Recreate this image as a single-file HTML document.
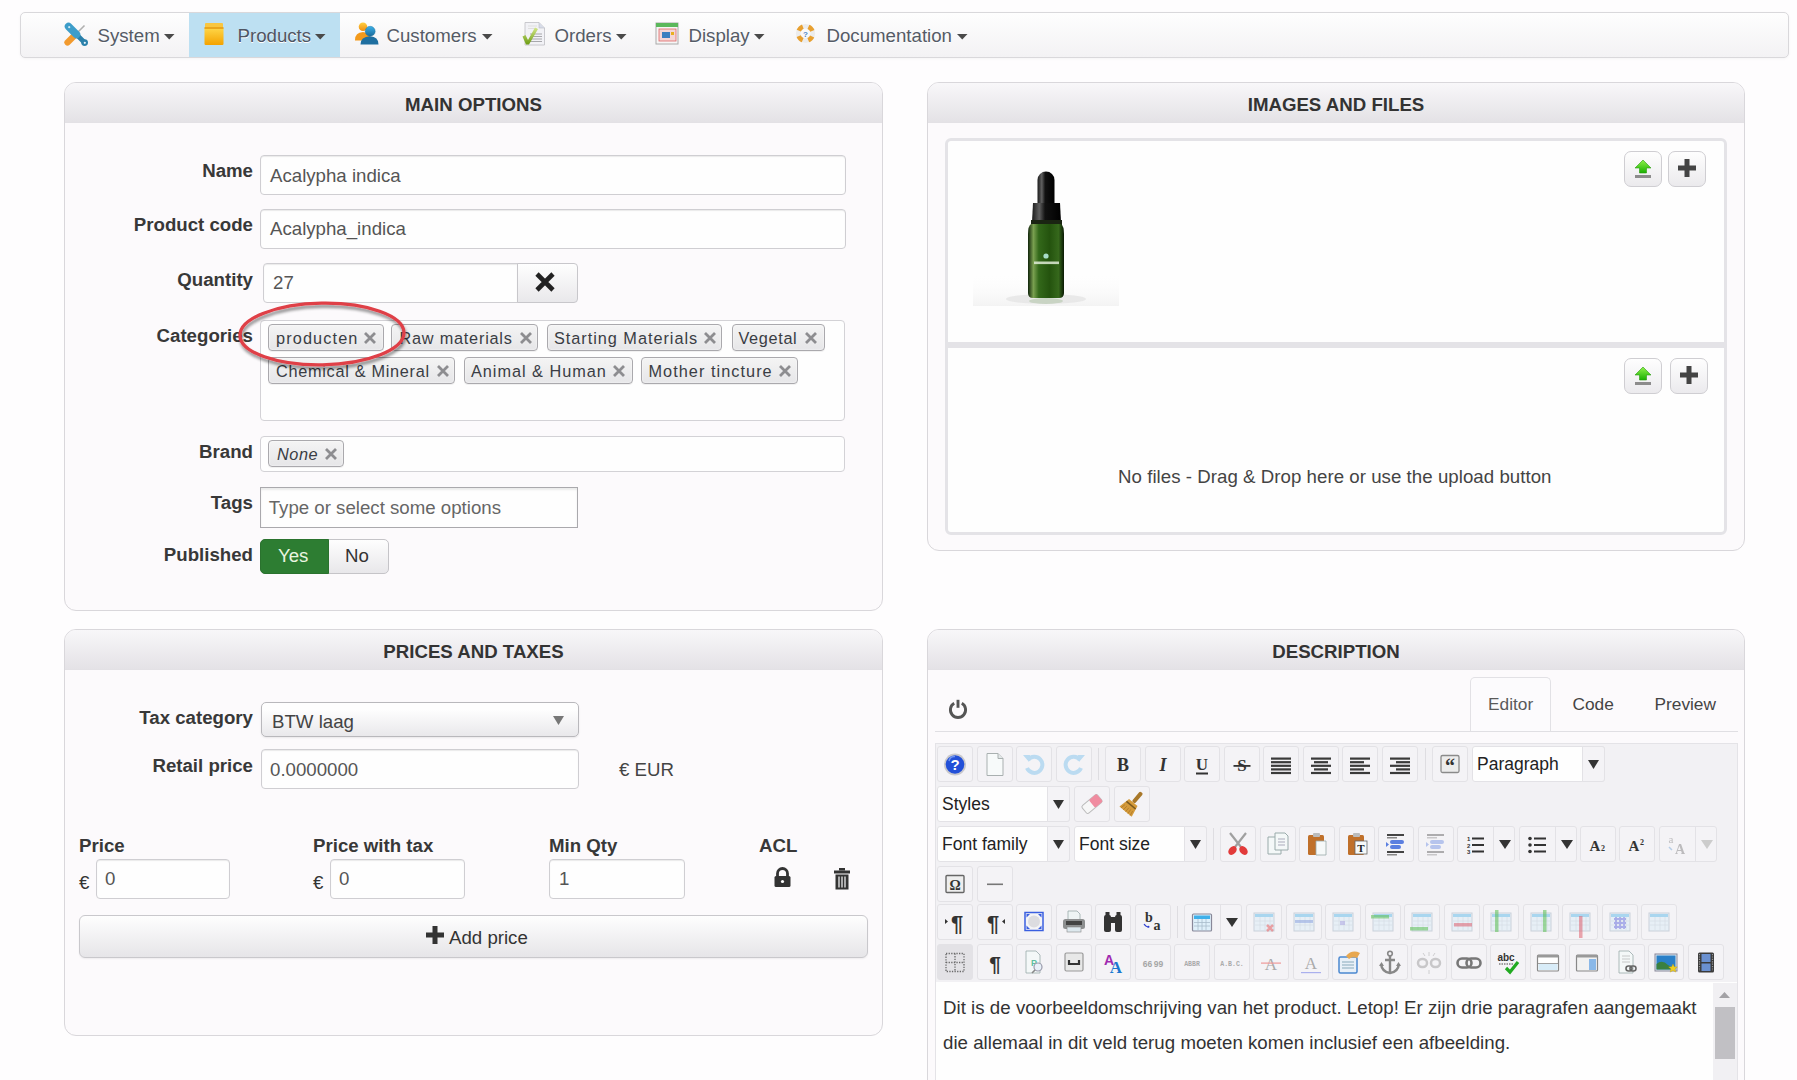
<!DOCTYPE html>
<html><head><meta charset="utf-8"><title>Product edit</title><style>
*{margin:0;padding:0;box-sizing:border-box}
html,body{width:1797px;height:1080px;overflow:hidden;background:#fefdfe;font-family:"Liberation Sans",sans-serif}
.t{position:absolute;line-height:1;white-space:nowrap}
.b{position:absolute}
.panel{position:absolute;border:1px solid #d9d7db;border-radius:12px;background:#fcfafc;overflow:hidden}
.ph{position:absolute;left:0;top:0;right:0;height:40px;background:linear-gradient(#f8f7f9,#e4e2e6);border-bottom:1px solid #e3e1e5}
.inp{position:absolute;border:1px solid #cfced2;border-radius:4px;background:#fefefe;box-shadow:inset 0 1px 1px rgba(0,0,0,.08)}
.tag{position:absolute;height:26px;border:1px solid #aaa9ad;border-radius:4px;background:linear-gradient(#f4f4f4,#e6e6e8);box-shadow:0 0 2px #fff inset,0 1px 0 rgba(0,0,0,.05)}
.tb{position:absolute;width:35px;height:35px;border:1px solid #e4e3e6;border-radius:3px;background:#f4f3f6}
</style></head>
<body>
<div class="b" style="left:20px;top:12px;width:1769px;height:46px;border:1px solid #d9d8db;border-radius:5px;background:linear-gradient(#fefefe,#f3f2f4);box-shadow:0 1px 3px rgba(0,0,0,.04)"></div>
<div class="b" style="left:189px;top:13px;width:151px;height:44px;background:#bde0f2"></div>
<div class="t" style="left:97.5px;top:26.70px;font-size:18.67px;color:#555b66;text-shadow:0 1px 0 #fff">System</div>
<svg class="b" style="left:164px;top:34px" width="11" height="5.5" viewBox="0 0 11 5.5"><path d="M0 0h10.5L5.25 5.5z" fill="#4a4a4a"/></svg>
<div class="t" style="left:237.5px;top:26.70px;font-size:18.67px;color:#4f5562;text-shadow:0 1px 0 #fff">Products</div>
<svg class="b" style="left:315px;top:34px" width="11" height="5.5" viewBox="0 0 11 5.5"><path d="M0 0h10.5L5.25 5.5z" fill="#4a4a4a"/></svg>
<div class="t" style="left:386.5px;top:26.70px;font-size:18.67px;color:#555b66;text-shadow:0 1px 0 #fff">Customers</div>
<svg class="b" style="left:482px;top:34px" width="11" height="5.5" viewBox="0 0 11 5.5"><path d="M0 0h10.5L5.25 5.5z" fill="#4a4a4a"/></svg>
<div class="t" style="left:554.5px;top:26.70px;font-size:18.67px;color:#555b66;text-shadow:0 1px 0 #fff">Orders</div>
<svg class="b" style="left:616px;top:34px" width="11" height="5.5" viewBox="0 0 11 5.5"><path d="M0 0h10.5L5.25 5.5z" fill="#4a4a4a"/></svg>
<div class="t" style="left:688.5px;top:26.70px;font-size:18.67px;color:#555b66;text-shadow:0 1px 0 #fff">Display</div>
<svg class="b" style="left:754px;top:34px" width="11" height="5.5" viewBox="0 0 11 5.5"><path d="M0 0h10.5L5.25 5.5z" fill="#4a4a4a"/></svg>
<div class="t" style="left:826.5px;top:26.70px;font-size:18.67px;color:#555b66;text-shadow:0 1px 0 #fff">Documentation</div>
<svg class="b" style="left:957px;top:34px" width="11" height="5.5" viewBox="0 0 11 5.5"><path d="M0 0h10.5L5.25 5.5z" fill="#4a4a4a"/></svg>
<svg class="b" style="left:64px;top:22px" width="25" height="25" viewBox="0 0 25 25">
<path d="M3.5 20.5 L11 13" stroke="#f29a2e" stroke-width="6.2" stroke-linecap="round"/>
<path d="M12 12 L20.5 3.5" stroke="#b0b0b0" stroke-width="1.6"/>
<path d="M13 13 L20.5 20.5" stroke="#2a80aa" stroke-width="4.6" stroke-linecap="round"/>
<path d="M4.5 4.5 L12.5 12.5" stroke="#3d9dc9" stroke-width="7.5" stroke-linecap="round"/>
<circle cx="5.2" cy="5.2" r="1.1" fill="#cde9f5"/>
<circle cx="20.6" cy="20.6" r="3.4" fill="#2a80aa"/><circle cx="20.8" cy="20.8" r="1.1" fill="#e8f4fa"/>
</svg>
<svg class="b" style="left:203px;top:22px" width="23" height="24" viewBox="0 0 23 24">
<defs><linearGradient id="pg" x1="0" y1="0" x2="0" y2="1"><stop offset="0" stop-color="#ffd84a"/><stop offset="1" stop-color="#f4a200"/></linearGradient></defs>
<path d="M2 2 Q2 1 3 1 H19 Q20 1 20 2 V6 H2z" fill="#f9c640"/>
<rect x="1.5" y="5.5" width="19" height="17.5" rx="1.2" fill="url(#pg)"/>
<rect x="1.5" y="5" width="19" height="2" fill="#e39a12" opacity="0.8"/>
</svg>
<svg class="b" style="left:354px;top:22px" width="25" height="24" viewBox="0 0 25 24">
<defs>
<linearGradient id="cg1" x1="0" y1="0" x2="0" y2="1"><stop offset="0" stop-color="#ffd040"/><stop offset="1" stop-color="#f08c10"/></linearGradient>
<linearGradient id="cg2" x1="0" y1="0" x2="0" y2="1"><stop offset="0" stop-color="#3cb0e8"/><stop offset="1" stop-color="#1a6a9a"/></linearGradient>
</defs>
<circle cx="9" cy="4.8" r="4.3" fill="url(#cg1)"/>
<path d="M1 18 Q1 10.5 9 10 Q16.5 10.5 16.5 17 L16 18.5 H1z" fill="#f39a1c"/>
<circle cx="16.2" cy="9.3" r="5" fill="url(#cg2)" stroke="#1e6e98" stroke-width="0.4"/>
<path d="M6.5 22.5 Q6.5 14.5 16 14.2 Q24.5 14.5 24.5 22.5z" fill="#1f6fa0"/>
</svg>
<svg class="b" style="left:521px;top:22px" width="25" height="24" viewBox="0 0 25 24">
<defs><linearGradient id="og" x1="0" y1="0" x2="0" y2="1"><stop offset="0" stop-color="#d4e88a"/><stop offset="1" stop-color="#6c9c12"/></linearGradient></defs>
<path d="M4 0.5h14l5.5 5.5v17H4z" fill="#f2f2f6" stroke="#c4c4c8" stroke-width="0.9"/>
<path d="M18 0.5v5.5h5.5" fill="#d8dce8" stroke="#b8bcc8" stroke-width="0.6"/>
<path d="M7 4h9M7 6.5h9" stroke="#dedede" stroke-width="1"/>
<path d="M9 12h12M9 14.5h12M9 17h12M9 19.5h12" stroke="#a8a8ac" stroke-width="1.1"/>
<path d="M1.5 14.5 L4.5 13 L7 18 L14 5.5 L17 7 L8 22.5 L5 22.5z" fill="url(#og)"/>
</svg>
<svg class="b" style="left:655px;top:22px" width="24" height="23" viewBox="0 0 24 23">
<rect x="1" y="1" width="22" height="21" fill="#f6f6f6" stroke="#aaa"/>
<rect x="1" y="1" width="22" height="4" fill="#5cb85c"/>
<rect x="4" y="7" width="17" height="12" fill="#f3d6d6" stroke="#e06666" stroke-width="0.8"/>
<rect x="7" y="10" width="8" height="6" fill="#3a7fc0"/>
<rect x="16" y="10" width="3" height="3" fill="#e8b020"/>
</svg>
<svg class="b" style="left:795px;top:22px" width="22" height="22" viewBox="0 0 22 22">
<circle cx="10.5" cy="11.5" r="7.3" fill="none" stroke="#ececec" stroke-width="4.6"/>
<g transform="rotate(45 10.5 11.5)"><circle cx="10.5" cy="11.5" r="7.3" fill="none" stroke="#e8a030" stroke-width="4.6" stroke-dasharray="5.73 5.73" stroke-dashoffset="2.87"/></g>
<text x="10.5" y="14.5" font-size="8" text-anchor="middle" fill="#4a88c8" font-family="Liberation Sans" font-weight="700">?</text>
</svg>
<div class="panel" style="left:64px;top:82px;width:819px;height:529px"><div class="ph"></div></div>
<div class="t" style="left:64.0px;width:819px;text-align:center;top:96.00px;font-size:18.67px;font-weight:700;color:#333;">MAIN OPTIONS</div>
<div class="panel" style="left:927px;top:82px;width:818px;height:469px"><div class="ph"></div></div>
<div class="t" style="left:927.0px;width:818px;text-align:center;top:96.00px;font-size:18.67px;font-weight:700;color:#333;">IMAGES AND FILES</div>
<div class="panel" style="left:64px;top:629px;width:819px;height:407px"><div class="ph"></div></div>
<div class="t" style="left:64.0px;width:819px;text-align:center;top:643.00px;font-size:18.67px;font-weight:700;color:#333;">PRICES AND TAXES</div>
<div class="panel" style="left:927px;top:629px;width:818px;height:500px"><div class="ph"></div></div>
<div class="t" style="left:927.0px;width:818px;text-align:center;top:643.00px;font-size:18.67px;font-weight:700;color:#333;">DESCRIPTION</div>
<div class="t" style="right:1544px;top:162.00px;font-size:18.67px;text-align:right;font-weight:700;color:#383838;">Name</div>
<div class="inp" style="left:260px;top:155px;width:586px;height:40px;"></div>
<div class="t" style="left:270px;top:166.50px;font-size:18.67px;color:#555;">Acalypha indica</div>
<div class="t" style="right:1544px;top:215.50px;font-size:18.67px;text-align:right;font-weight:700;color:#383838;">Product code</div>
<div class="inp" style="left:260px;top:209px;width:586px;height:40px;"></div>
<div class="t" style="left:270px;top:220.00px;font-size:18.67px;color:#555;">Acalypha_indica</div>
<div class="t" style="right:1544px;top:270.50px;font-size:18.67px;text-align:right;font-weight:700;color:#383838;">Quantity</div>
<div class="inp" style="left:263px;top:263px;width:255px;height:40px;border-radius:4px 0 0 4px"></div>
<div class="t" style="left:273px;top:274.00px;font-size:18.67px;color:#555;">27</div>
<div class="b" style="left:517px;top:263px;width:61px;height:40px;border:1px solid #c8c7cb;border-radius:0 4px 4px 0;background:linear-gradient(#fefefe,#e9e8eb)"></div>
<svg class="b" style="left:534px;top:271px" width="22" height="22" viewBox="0 0 22 22"><path d="M3 3L19 19M19 3L3 19" stroke="#222" stroke-width="4.6" stroke-linecap="butt"/></svg>
<div class="t" style="right:1544px;top:327.30px;font-size:18.67px;text-align:right;font-weight:700;color:#383838;">Categories</div>
<div class="b" style="left:260px;top:320px;width:585px;height:101px;border:1px solid #d3d2d6;border-radius:4px;background:#fefefe"></div>
<div class="tag" style="left:268px;top:324px;width:116px;height:27px;"></div>
<div class="t" style="left:276px;top:330.00px;font-size:16.3px;color:#3a3d44;letter-spacing:1.12px;">producten</div>
<svg class="b" style="left:363px;top:331px" width="14" height="14" viewBox="0 0 14 14"><path d="M2 2L12 12M12 2L2 12" stroke="#8d8d90" stroke-width="2.8"/></svg>
<div class="tag" style="left:391px;top:324px;width:147px;height:27px;"></div>
<div class="t" style="left:399.5px;top:330.00px;font-size:16.3px;color:#3a3d44;letter-spacing:0.77px;">Raw materials</div>
<svg class="b" style="left:519px;top:331px" width="14" height="14" viewBox="0 0 14 14"><path d="M2 2L12 12M12 2L2 12" stroke="#8d8d90" stroke-width="2.8"/></svg>
<div class="tag" style="left:547px;top:324px;width:175px;height:27px;"></div>
<div class="t" style="left:554px;top:330.00px;font-size:16.3px;color:#3a3d44;letter-spacing:0.97px;">Starting Materials</div>
<svg class="b" style="left:703px;top:331px" width="14" height="14" viewBox="0 0 14 14"><path d="M2 2L12 12M12 2L2 12" stroke="#8d8d90" stroke-width="2.8"/></svg>
<div class="tag" style="left:732px;top:324px;width:93px;height:27px;"></div>
<div class="t" style="left:738.5px;top:330.00px;font-size:16.3px;color:#3a3d44;letter-spacing:0.65px;">Vegetal</div>
<svg class="b" style="left:804px;top:331px" width="14" height="14" viewBox="0 0 14 14"><path d="M2 2L12 12M12 2L2 12" stroke="#8d8d90" stroke-width="2.8"/></svg>
<div class="tag" style="left:268px;top:357px;width:187px;height:27px;"></div>
<div class="t" style="left:276px;top:363.00px;font-size:16.3px;color:#3a3d44;letter-spacing:0.7px;">Chemical &amp; Mineral</div>
<svg class="b" style="left:436px;top:364px" width="14" height="14" viewBox="0 0 14 14"><path d="M2 2L12 12M12 2L2 12" stroke="#8d8d90" stroke-width="2.8"/></svg>
<div class="tag" style="left:464px;top:357px;width:169px;height:27px;"></div>
<div class="t" style="left:471px;top:363.00px;font-size:16.3px;color:#3a3d44;letter-spacing:0.97px;">Animal &amp; Human</div>
<svg class="b" style="left:612px;top:364px" width="14" height="14" viewBox="0 0 14 14"><path d="M2 2L12 12M12 2L2 12" stroke="#8d8d90" stroke-width="2.8"/></svg>
<div class="tag" style="left:641px;top:357px;width:157px;height:27px;"></div>
<div class="t" style="left:648.5px;top:363.00px;font-size:16.3px;color:#3a3d44;letter-spacing:1.04px;">Mother tincture</div>
<svg class="b" style="left:778px;top:364px" width="14" height="14" viewBox="0 0 14 14"><path d="M2 2L12 12M12 2L2 12" stroke="#8d8d90" stroke-width="2.8"/></svg>
<div class="t" style="right:1544px;top:443.00px;font-size:18.67px;text-align:right;font-weight:700;color:#383838;">Brand</div>
<div class="b" style="left:260px;top:436px;width:585px;height:36px;border:1px solid #d3d2d6;border-radius:4px;background:#fefefe"></div>
<div class="tag" style="left:268px;top:440px;width:76px;height:27px;"></div>
<div class="t" style="left:277px;top:446.00px;font-size:16.3px;color:#3a3d44;letter-spacing:0.55px;font-style:italic">None</div>
<svg class="b" style="left:324px;top:447px" width="14" height="14" viewBox="0 0 14 14"><path d="M2 2L12 12M12 2L2 12" stroke="#8d8d90" stroke-width="2.8"/></svg>
<div class="t" style="right:1544px;top:493.80px;font-size:18.67px;text-align:right;font-weight:700;color:#383838;">Tags</div>
<div class="b" style="left:260px;top:487px;width:318px;height:41px;border:1px solid #aaa9ad;background:#fefefe;box-shadow:inset 0 2px 2px rgba(0,0,0,.08)"></div>
<div class="t" style="left:268.7px;top:498.80px;font-size:18.67px;color:#666;">Type or select some options</div>
<div class="t" style="right:1544px;top:546.40px;font-size:18.67px;text-align:right;font-weight:700;color:#383838;">Published</div>
<div class="b" style="left:260px;top:539px;width:129px;height:35px;border:1px solid #c5c4c8;border-radius:5px;background:linear-gradient(#fefefe,#e8e7ea);overflow:hidden"></div>
<div class="b" style="left:260px;top:539px;width:69px;height:35px;border-radius:5px 0 0 5px;background:#2d7d32;border:1px solid #2a722e"></div>
<div class="t" style="left:278px;top:547.40px;font-size:18.67px;color:#e9f5e0;">Yes</div>
<div class="t" style="left:345px;top:547.40px;font-size:18.67px;color:#333;">No</div>
<svg class="b" style="left:225px;top:290px" width="200" height="90" viewBox="225 290 200 90"><defs><filter id="esh" x="-10%" y="-20%" width="120%" height="150%"><feGaussianBlur in="SourceAlpha" stdDeviation="1.6"/><feOffset dx="0.5" dy="2.5" result="o"/><feComponentTransfer><feFuncA type="linear" slope="0.45"/></feComponentTransfer><feMerge><feMergeNode/><feMergeNode in="SourceGraphic"/></feMerge></filter></defs><g filter="url(#esh)"><ellipse cx="322" cy="334" rx="82" ry="30.8" transform="rotate(-1 322 334)" fill="none" stroke="#df3f47" stroke-width="3.3"/></g></svg><div class="b" style="left:945px;top:138px;width:782px;height:207px;border:3px solid #e4e3e7;border-radius:6px 6px 0 0;background:#fefefe"></div>
<div class="b" style="left:945px;top:345px;width:782px;height:190px;border:3px solid #e4e3e7;border-top-width:3px;border-radius:0 0 6px 6px;background:#fefefe"></div>
<svg class="b" style="left:973px;top:160px" width="146" height="148" viewBox="0 0 146 148">
<defs>
<linearGradient id="bg1" x1="0" y1="0" x2="1" y2="0"><stop offset="0" stop-color="#10240a"/><stop offset="0.15" stop-color="#7aa050"/><stop offset="0.3" stop-color="#33681a"/><stop offset="0.6" stop-color="#24530e"/><stop offset="0.85" stop-color="#36681c"/><stop offset="1" stop-color="#0a1a04"/></linearGradient>
<linearGradient id="bc" x1="0" y1="0" x2="1" y2="0"><stop offset="0" stop-color="#1a1a1a"/><stop offset="0.25" stop-color="#606060"/><stop offset="0.45" stop-color="#111"/><stop offset="1" stop-color="#000"/></linearGradient>
<linearGradient id="sh" x1="0" y1="0" x2="0" y2="1"><stop offset="0" stop-color="#fff" stop-opacity="0"/><stop offset="1" stop-color="#ececec"/></linearGradient>
</defs>
<rect x="0" y="112" width="146" height="34" fill="url(#sh)" opacity="0.6"/><ellipse cx="73" cy="139" rx="40" ry="5" fill="#e2e2e2" opacity="0.7"/>
<path d="M64.5 43 V20 A8.5 8.5 0 0 1 81.5 20 V43z" fill="url(#bc)"/>
<path d="M60 43 H87 L88 62 H59z" fill="url(#bc)"/>
<path d="M58 60 H89 V65 H58z" fill="#1a2412"/>
<path d="M58 64 Q55 66 55 74 V133 Q55 138 60 138 H86 Q91 138 91 133 V74 Q91 66 88 64z" fill="url(#bg1)"/>
<circle cx="73" cy="96" r="2.6" fill="#a8dcc8"/>
<rect x="61" y="101.5" width="25" height="2.6" fill="#e0ecd8" opacity="0.85"/>
<ellipse cx="73" cy="141" rx="17" ry="3" fill="#90b080" opacity="0.35"/>
</svg>
<div class="b" style="left:1624px;top:151px;width:38px;height:36px;border:1px solid #cfced2;border-radius:7px;background:linear-gradient(#fefefe,#ebeaed)"></div>
<svg class="b" style="left:1632px;top:158px" width="22" height="22" viewBox="0 0 22 22">
<defs><linearGradient id="ug" x1="0" y1="0" x2="0" y2="1"><stop offset="0" stop-color="#8ef24a"/><stop offset="1" stop-color="#19b000"/></linearGradient></defs>
<path d="M11 2 L19 10 H14.5 V15 H7.5 V10 H3z" fill="url(#ug)" stroke="#2a9a10" stroke-width="0.6"/>
<rect x="3" y="17" width="16" height="3" fill="#8c8c8c"/>
</svg>
<div class="b" style="left:1668px;top:151px;width:38px;height:36px;border:1px solid #cfced2;border-radius:7px;background:linear-gradient(#fefefe,#ebeaed)"></div>
<svg class="b" style="left:1677px;top:158px" width="20" height="20" viewBox="0 0 20 20"><path d="M7.5 1h5v6.5H19v5h-6.5V19h-5v-6.5H1v-5h6.5z" fill="#444" transform="scale(1.0)"/></svg>
<div class="b" style="left:1624px;top:358px;width:38px;height:36px;border:1px solid #cfced2;border-radius:7px;background:linear-gradient(#fefefe,#ebeaed)"></div>
<svg class="b" style="left:1632px;top:365px" width="22" height="22" viewBox="0 0 22 22">
<defs><linearGradient id="ug" x1="0" y1="0" x2="0" y2="1"><stop offset="0" stop-color="#8ef24a"/><stop offset="1" stop-color="#19b000"/></linearGradient></defs>
<path d="M11 2 L19 10 H14.5 V15 H7.5 V10 H3z" fill="url(#ug)" stroke="#2a9a10" stroke-width="0.6"/>
<rect x="3" y="17" width="16" height="3" fill="#8c8c8c"/>
</svg>
<div class="b" style="left:1670px;top:358px;width:38px;height:36px;border:1px solid #cfced2;border-radius:7px;background:linear-gradient(#fefefe,#ebeaed)"></div>
<svg class="b" style="left:1679px;top:365px" width="20" height="20" viewBox="0 0 20 20"><path d="M7.5 1h5v6.5H19v5h-6.5V19h-5v-6.5H1v-5h6.5z" fill="#444" transform="scale(1.0)"/></svg>
<div class="t" style="left:1118px;top:468.30px;font-size:18.67px;color:#444;letter-spacing:0.04px;">No files - Drag &amp; Drop here or use the upload button</div>
<div class="t" style="right:1544px;top:709.40px;font-size:18.67px;text-align:right;font-weight:700;color:#383838;">Tax category</div>
<div class="b" style="left:261px;top:702px;width:318px;height:35px;border:1px solid #b9b8bc;border-radius:5px;background:linear-gradient(#fefefe 20%,#e9e8eb);box-shadow:0 1px 2px rgba(0,0,0,.08)"></div>
<div class="t" style="left:272px;top:712.50px;font-size:18.67px;color:#444;">BTW laag</div>
<svg class="b" style="left:553px;top:716px" width="11" height="9" viewBox="0 0 11 9"><path d="M0 0h11L5.5 9z" fill="#777"/></svg>
<div class="t" style="right:1544px;top:757.00px;font-size:18.67px;text-align:right;font-weight:700;color:#383838;">Retail price</div>
<div class="inp" style="left:261px;top:749px;width:318px;height:40px;"></div>
<div class="t" style="left:270px;top:761.00px;font-size:18.67px;color:#555;">0.0000000</div>
<div class="t" style="left:619px;top:761.00px;font-size:18.67px;color:#444;">€ EUR</div>
<div class="t" style="left:79px;top:837.20px;font-size:18.67px;font-weight:700;color:#383838;">Price</div>
<div class="t" style="left:313px;top:837.20px;font-size:18.67px;font-weight:700;color:#383838;">Price with tax</div>
<div class="t" style="left:549px;top:837.20px;font-size:18.67px;font-weight:700;color:#383838;">Min Qty</div>
<div class="t" style="left:759px;top:837.20px;font-size:18.67px;font-weight:700;color:#383838;">ACL</div>
<div class="t" style="left:79px;top:874.00px;font-size:18.67px;color:#333;">€</div>
<div class="inp" style="left:96px;top:859px;width:134px;height:40px;"></div>
<div class="t" style="left:105px;top:870.00px;font-size:18.67px;color:#555;">0</div>
<div class="t" style="left:313px;top:874.00px;font-size:18.67px;color:#333;">€</div>
<div class="inp" style="left:330px;top:859px;width:135px;height:40px;"></div>
<div class="t" style="left:339px;top:870.00px;font-size:18.67px;color:#555;">0</div>
<div class="inp" style="left:549px;top:859px;width:136px;height:40px;"></div>
<div class="t" style="left:559px;top:870.00px;font-size:18.67px;color:#555;">1</div>
<svg class="b" style="left:773px;top:867px" width="19" height="21" viewBox="0 0 19 21">
<path d="M4.5 9 V6.5 A5 5 0 0 1 14.5 6.5 V9" fill="none" stroke="#333" stroke-width="2.8"/>
<rect x="1.5" y="9" width="16" height="11" rx="1.5" fill="#333"/>
<circle cx="9.5" cy="14.5" r="1.6" fill="#fff"/>
</svg>
<svg class="b" style="left:833px;top:867px" width="18" height="23" viewBox="0 0 18 23">
<rect x="6" y="1" width="6" height="2.5" fill="#333"/>
<rect x="1" y="3.5" width="16" height="3" fill="#333"/>
<rect x="2.5" y="7.5" width="13" height="15" fill="#333"/>
<path d="M6 9.5V20.5M9 9.5V20.5M12 9.5V20.5" stroke="#fbfafc" stroke-width="1.2"/>
</svg>
<div class="b" style="left:79px;top:915px;width:789px;height:43px;border:1px solid #c9c8cc;border-radius:6px;background:linear-gradient(#fefefe,#e6e5e8);box-shadow:0 1px 2px rgba(0,0,0,.06)"></div>
<svg class="b" style="left:425px;top:925px" width="20" height="20" viewBox="0 0 20 20"><path d="M7.5 1h5v6.5H19v5h-6.5V19h-5v-6.5H1v-5h6.5z" fill="#333" transform="scale(1.0)"/></svg>
<div class="t" style="left:449px;top:929.30px;font-size:18.67px;color:#333;">Add price</div>
<svg class="b" style="left:947px;top:697px" width="22" height="22" viewBox="0 0 22 22">
<path d="M7.2 6.3 A7.6 7.6 0 1 0 14.8 6.3" fill="none" stroke="#555" stroke-width="2.9" stroke-linecap="butt"/>
<path d="M11 2.8 V10.8" stroke="#555" stroke-width="2.9"/>
</svg>
<div class="b" style="left:1470px;top:677px;width:81px;height:55px;border:1px solid #e2e1e5;border-bottom:none;border-radius:5px 5px 0 0;background:#fcfbfd"></div>
<div class="b" style="left:935px;top:731px;width:803px;height:1px;background:#e0dfe3"></div>
<div class="t" style="left:1488px;top:696.16px;font-size:17.3px;color:#5a5a5a;">Editor</div>
<div class="t" style="left:1572.5px;top:696.16px;font-size:17.3px;color:#444;">Code</div>
<div class="t" style="left:1654.5px;top:696.16px;font-size:17.3px;color:#444;">Preview</div>
<div class="b" style="left:935px;top:743px;width:803px;height:240px;background:#f2f1f4;border:1px solid #e4e3e7;border-bottom:1px solid #dcdbdf"></div>
<div class="b" style="left:935px;top:982px;width:803px;height:110px;background:#fefefe;border-left:1px solid #e4e3e7;border-right:1px solid #e4e3e7"></div>
<div style="position:absolute;left:-0.5px;top:0;width:1797px;height:1080px"><div class="b" style="left:937.5px;top:746px;width:36px;height:36px;border:1px solid #e3e2e6;border-radius:3px;background:#f4f3f6"></div>
<svg class="b" style="left:937.5px;top:746px" width="36" height="36" viewBox="0 0 36 36"><circle cx="18" cy="18.5" r="11" fill="#c8c8cc"/><circle cx="18" cy="18.5" r="9.3" fill="#2350d8"/><path d="M12 15 Q13 10 18 10.5" stroke="#6f95f0" stroke-width="1.5" fill="none"/><text x="18" y="24" font-size="15" font-weight="700" text-anchor="middle" fill="#fff" font-family="Liberation Sans">?</text></svg>
<div class="b" style="left:977.0px;top:746px;width:36px;height:36px;border:1px solid #e3e2e6;border-radius:3px;background:#f4f3f6"></div>
<svg class="b" style="left:977.0px;top:746px" width="36" height="36" viewBox="0 0 36 36"><path d="M10 7.5h11l5 5v17H10z" fill="#f7fafa" stroke="#a9b0b0" stroke-width="1"/><path d="M21 7.5v5h5" fill="#e2e8e8" stroke="#a9b0b0" stroke-width="1"/></svg>
<div class="b" style="left:1016.5px;top:746px;width:36px;height:36px;border:1px solid #e3e2e6;border-radius:3px;background:#f4f3f6"></div>
<svg class="b" style="left:1016.5px;top:746px" width="36" height="36" viewBox="0 0 36 36"><g opacity="0.75"><path d="M12 14 A8 8 0 1 1 11 22" fill="none" stroke="#a8d4f0" stroke-width="4"/><path d="M7 9 L14 9 L13 16z" fill="#a8d4f0"/></g></svg>
<div class="b" style="left:1056.0px;top:746px;width:36px;height:36px;border:1px solid #e3e2e6;border-radius:3px;background:#f4f3f6"></div>
<svg class="b" style="left:1056.0px;top:746px" width="36" height="36" viewBox="0 0 36 36"><g opacity="0.75"><path d="M24 14 A8 8 0 1 0 25 22" fill="none" stroke="#a8d4f0" stroke-width="4"/><path d="M29 9 L22 9 L23 16z" fill="#a8d4f0"/></g></svg>
<div class="b" style="left:1098.3px;top:748px;width:1px;height:32px;background:#dedde1"></div>
<div class="b" style="left:1105.5px;top:746px;width:36px;height:36px;border:1px solid #e3e2e6;border-radius:3px;background:#f4f3f6"></div>
<svg class="b" style="left:1105.5px;top:746px" width="36" height="36" viewBox="0 0 36 36"><text x="18" y="25" font-size="18" font-weight="700" text-anchor="middle" fill="#333" font-family="Liberation Serif" >B</text></svg>
<div class="b" style="left:1145.0px;top:746px;width:36px;height:36px;border:1px solid #e3e2e6;border-radius:3px;background:#f4f3f6"></div>
<svg class="b" style="left:1145.0px;top:746px" width="36" height="36" viewBox="0 0 36 36"><text x="18" y="25" font-size="18" font-weight="700" font-style="italic" text-anchor="middle" fill="#333" font-family="Liberation Serif" >I</text></svg>
<div class="b" style="left:1184.5px;top:746px;width:36px;height:36px;border:1px solid #e3e2e6;border-radius:3px;background:#f4f3f6"></div>
<svg class="b" style="left:1184.5px;top:746px" width="36" height="36" viewBox="0 0 36 36"><text x="18" y="24" font-size="17" font-weight="700" text-anchor="middle" fill="#333" font-family="Liberation Serif" >U</text><rect x="12" y="26.5" width="12" height="2" fill="#333"/></svg>
<div class="b" style="left:1224.0px;top:746px;width:36px;height:36px;border:1px solid #e3e2e6;border-radius:3px;background:#f4f3f6"></div>
<svg class="b" style="left:1224.0px;top:746px" width="36" height="36" viewBox="0 0 36 36"><text x="18" y="25" font-size="17" font-weight="700" text-anchor="middle" fill="#333" font-family="Liberation Serif" >S</text><rect x="9.5" y="19" width="17" height="1.8" fill="#333"/></svg>
<div class="b" style="left:1263.5px;top:746px;width:36px;height:36px;border:1px solid #e3e2e6;border-radius:3px;background:#f4f3f6"></div>
<svg class="b" style="left:1263.5px;top:746px" width="36" height="36" viewBox="0 0 36 36"><rect x="8" y="11.5" width="20" height="2.2" fill="#3a3a3a"/><rect x="8" y="15.1" width="20" height="2.2" fill="#3a3a3a"/><rect x="8" y="18.7" width="20" height="2.2" fill="#3a3a3a"/><rect x="8" y="22.3" width="20" height="2.2" fill="#3a3a3a"/><rect x="8" y="25.9" width="20" height="2.2" fill="#3a3a3a"/></svg>
<div class="b" style="left:1303.0px;top:746px;width:36px;height:36px;border:1px solid #e3e2e6;border-radius:3px;background:#f4f3f6"></div>
<svg class="b" style="left:1303.0px;top:746px" width="36" height="36" viewBox="0 0 36 36"><rect x="8" y="11.5" width="20" height="2.2" fill="#3a3a3a"/><rect x="11" y="15.1" width="14" height="2.2" fill="#3a3a3a"/><rect x="8" y="18.7" width="20" height="2.2" fill="#3a3a3a"/><rect x="11" y="22.3" width="14" height="2.2" fill="#3a3a3a"/><rect x="8" y="25.9" width="20" height="2.2" fill="#3a3a3a"/></svg>
<div class="b" style="left:1342.5px;top:746px;width:36px;height:36px;border:1px solid #e3e2e6;border-radius:3px;background:#f4f3f6"></div>
<svg class="b" style="left:1342.5px;top:746px" width="36" height="36" viewBox="0 0 36 36"><rect x="8" y="11.5" width="20" height="2.2" fill="#3a3a3a"/><rect x="8" y="15.1" width="14" height="2.2" fill="#3a3a3a"/><rect x="8" y="18.7" width="20" height="2.2" fill="#3a3a3a"/><rect x="8" y="22.3" width="14" height="2.2" fill="#3a3a3a"/><rect x="8" y="25.9" width="20" height="2.2" fill="#3a3a3a"/></svg>
<div class="b" style="left:1382.0px;top:746px;width:36px;height:36px;border:1px solid #e3e2e6;border-radius:3px;background:#f4f3f6"></div>
<svg class="b" style="left:1382.0px;top:746px" width="36" height="36" viewBox="0 0 36 36"><rect x="8" y="11.5" width="20" height="2.2" fill="#3a3a3a"/><rect x="14" y="15.1" width="14" height="2.2" fill="#3a3a3a"/><rect x="8" y="18.7" width="20" height="2.2" fill="#3a3a3a"/><rect x="14" y="22.3" width="14" height="2.2" fill="#3a3a3a"/><rect x="8" y="25.9" width="20" height="2.2" fill="#3a3a3a"/></svg>
<div class="b" style="left:1425px;top:748px;width:1px;height:32px;background:#dedde1"></div>
<div class="b" style="left:1432.5px;top:746px;width:36px;height:36px;border:1px solid #e3e2e6;border-radius:3px;background:#f4f3f6"></div>
<svg class="b" style="left:1432.5px;top:746px" width="36" height="36" viewBox="0 0 36 36"><rect x="9" y="9.5" width="18" height="17" rx="1.5" fill="#ececec" stroke="#8a8a8a" stroke-width="1.3"/><text x="18" y="27" font-size="20" font-weight="700" text-anchor="middle" fill="#333" font-family="Liberation Serif">&#8220;</text></svg>
<div class="b" style="left:1472.5px;top:746px;width:132.5px;height:36px;border:1px solid #e3e2e6;border-radius:3px;background:#fefefe"></div>
<div class="b" style="left:1582.0px;top:746px;width:23px;height:36px;border:1px solid #e3e2e6;border-radius:0 3px 3px 0;background:#f4f3f6"></div>
<div class="t" style="left:1477.5px;top:756.49px;font-size:17.5px;color:#222;">Paragraph</div>
<svg class="b" style="left:1588.0px;top:760px" width="11" height="9" viewBox="0 0 11 9"><path d="M0 0h11L5.5 9z" fill="#333"/></svg>
<div class="b" style="left:937.5px;top:786px;width:133px;height:36px;border:1px solid #e3e2e6;border-radius:3px;background:#fefefe"></div>
<div class="b" style="left:1047.5px;top:786px;width:23px;height:36px;border:1px solid #e3e2e6;border-radius:0 3px 3px 0;background:#f4f3f6"></div>
<div class="t" style="left:942.5px;top:796.49px;font-size:17.5px;color:#222;">Styles</div>
<svg class="b" style="left:1053.5px;top:800px" width="11" height="9" viewBox="0 0 11 9"><path d="M0 0h11L5.5 9z" fill="#333"/></svg>
<div class="b" style="left:1074.5px;top:786px;width:36px;height:36px;border:1px solid #e3e2e6;border-radius:3px;background:#f4f3f6"></div>
<svg class="b" style="left:1074.5px;top:786px" width="36" height="36" viewBox="0 0 36 36"><g transform="rotate(-40 18 18)"><rect x="8" y="13" width="20" height="10" rx="2" fill="#f7f7f7" stroke="#bbb"/><rect x="18" y="13" width="10" height="10" rx="1.5" fill="#f08ca0"/></g></svg>
<div class="b" style="left:1114px;top:786px;width:36px;height:36px;border:1px solid #e3e2e6;border-radius:3px;background:#f4f3f6"></div>
<svg class="b" style="left:1114px;top:786px" width="36" height="36" viewBox="0 0 36 36"><g transform="rotate(40 18 18)"><rect x="16" y="3" width="4" height="13" rx="1.5" fill="#a8782a" transform="rotate(0)"/><path d="M12.5 16h11l2.5 12H10z" fill="#d49a3a"/><path d="M12 19.5h12" stroke="#7a5a20" stroke-width="1.6"/><path d="M12 28l1-5M15 28l.5-5M18 28v-5M21 28l-.5-5M24 28l-1-5" stroke="#b07a28" stroke-width="0.8"/></g></svg>
<div class="b" style="left:937.5px;top:825.5px;width:133px;height:36px;border:1px solid #e3e2e6;border-radius:3px;background:#fefefe"></div>
<div class="b" style="left:1047.5px;top:825.5px;width:23px;height:36px;border:1px solid #e3e2e6;border-radius:0 3px 3px 0;background:#f4f3f6"></div>
<div class="t" style="left:942.5px;top:835.99px;font-size:17.5px;color:#222;">Font family</div>
<svg class="b" style="left:1053.5px;top:839.5px" width="11" height="9" viewBox="0 0 11 9"><path d="M0 0h11L5.5 9z" fill="#333"/></svg>
<div class="b" style="left:1074.5px;top:825.5px;width:133px;height:36px;border:1px solid #e3e2e6;border-radius:3px;background:#fefefe"></div>
<div class="b" style="left:1184.5px;top:825.5px;width:23px;height:36px;border:1px solid #e3e2e6;border-radius:0 3px 3px 0;background:#f4f3f6"></div>
<div class="t" style="left:1079.5px;top:835.99px;font-size:17.5px;color:#222;">Font size</div>
<svg class="b" style="left:1190.5px;top:839.5px" width="11" height="9" viewBox="0 0 11 9"><path d="M0 0h11L5.5 9z" fill="#333"/></svg>
<div class="b" style="left:1213.6px;top:827.5px;width:1px;height:32px;background:#dedde1"></div>
<div class="b" style="left:1220.6px;top:825.5px;width:36px;height:36px;border:1px solid #e3e2e6;border-radius:3px;background:#f4f3f6"></div>
<svg class="b" style="left:1220.6px;top:825.5px" width="36" height="36" viewBox="0 0 36 36"><path d="M10 7 L21 21M26 7 L15 21" stroke="#a0a0a0" stroke-width="2.2"/><ellipse cx="12.5" cy="24.5" rx="3.6" ry="5" transform="rotate(40 12.5 24.5)" fill="#e23a3a"/><ellipse cx="23.5" cy="24.5" rx="3.6" ry="5" transform="rotate(-40 23.5 24.5)" fill="#e23a3a"/></svg>
<div class="b" style="left:1260.1px;top:825.5px;width:36px;height:36px;border:1px solid #e3e2e6;border-radius:3px;background:#f4f3f6"></div>
<svg class="b" style="left:1260.1px;top:825.5px" width="36" height="36" viewBox="0 0 36 36"><path d="M8 11h10l3 3v14H8z" fill="#f4f8f8" stroke="#9aa" stroke-width="1"/><path d="M15 7h10l3 3v14H15z" fill="#f4f8f8" stroke="#9aa" stroke-width="1"/><path d="M18 13h7M18 16h7M18 19h7" stroke="#aab" stroke-width="1"/></svg>
<div class="b" style="left:1299.6px;top:825.5px;width:36px;height:36px;border:1px solid #e3e2e6;border-radius:3px;background:#f4f3f6"></div>
<svg class="b" style="left:1299.6px;top:825.5px" width="36" height="36" viewBox="0 0 36 36"><rect x="9" y="9" width="16" height="20" rx="1.5" fill="#c0702a"/><rect x="14" y="7" width="7" height="4" rx="1" fill="#bbb"/><path d="M17 15h10v14H17z" fill="#f6f9f9" stroke="#9aa" stroke-width="0.8"/></svg>
<div class="b" style="left:1339.1px;top:825.5px;width:36px;height:36px;border:1px solid #e3e2e6;border-radius:3px;background:#f4f3f6"></div>
<svg class="b" style="left:1339.1px;top:825.5px" width="36" height="36" viewBox="0 0 36 36"><rect x="9" y="9" width="16" height="20" rx="1.5" fill="#c0702a"/><rect x="14" y="7" width="7" height="4" rx="1" fill="#bbb"/><rect x="16" y="15" width="12" height="13" fill="#f6f9f9" stroke="#666" stroke-width="0.8"/><text x="22" y="26" font-size="11" font-weight="700" text-anchor="middle" fill="#222" font-family="Liberation Serif">T</text></svg>
<div class="b" style="left:1378.6px;top:825.5px;width:36px;height:36px;border:1px solid #e3e2e6;border-radius:3px;background:#f4f3f6"></div>
<svg class="b" style="left:1378.6px;top:825.5px" width="36" height="36" viewBox="0 0 36 36"><rect x="9" y="8" width="17" height="2" fill="#444"/><rect x="9" y="11" width="10" height="1.5" fill="#888"/><rect x="12" y="14" width="14" height="4" rx="2" fill="#5b7fe0"/><rect x="12" y="19" width="11" height="4" rx="2" fill="#5b7fe0"/><path d="M8 16 L11 18.5 L8 21z" fill="#5b7fe0"/><rect x="9" y="25" width="17" height="2" fill="#444"/><rect x="9" y="28" width="10" height="1.5" fill="#888"/></svg>
<div class="b" style="left:1418px;top:825.5px;width:36px;height:36px;border:1px solid #e3e2e6;border-radius:3px;background:#f4f3f6"></div>
<svg class="b" style="left:1418px;top:825.5px" width="36" height="36" viewBox="0 0 36 36"><g opacity="0.4"><rect x="9" y="8" width="17" height="2" fill="#444"/><rect x="9" y="11" width="10" height="1.5" fill="#888"/><rect x="12" y="14" width="14" height="4" rx="2" fill="#5b7fe0"/><rect x="12" y="19" width="11" height="4" rx="2" fill="#5b7fe0"/><path d="M8 16 L11 18.5 L8 21z" fill="#5b7fe0"/><rect x="9" y="25" width="17" height="2" fill="#444"/><rect x="9" y="28" width="10" height="1.5" fill="#888"/></g></svg>
<div class="b" style="left:1457.6px;top:825.5px;width:58px;height:36px;border:1px solid #e3e2e6;border-radius:3px;background:#f4f3f6"></div>
<svg class="b" style="left:1457.6px;top:825.5px" width="36" height="36" viewBox="0 0 36 36"><text x="10" y="15" font-size="6" font-weight="700" fill="#333" font-family="Liberation Sans">1</text><text x="10" y="21.5" font-size="6" font-weight="700" fill="#333" font-family="Liberation Sans">2</text><text x="10" y="28" font-size="6" font-weight="700" fill="#333" font-family="Liberation Sans">3</text><path d="M15 12.5h12M15 19h12M15 25.5h12" stroke="#333" stroke-width="1.8"/></svg>
<div class="b" style="left:1493.6px;top:826.5px;width:1px;height:34px;background:#e3e2e6"></div><svg class="b" style="left:1499.6px;top:839.5px" width="12" height="9" viewBox="0 0 12 9"><path d="M0 0h12L6 9z" fill="#333"/></svg>
<div class="b" style="left:1519.3px;top:825.5px;width:58px;height:36px;border:1px solid #e3e2e6;border-radius:3px;background:#f4f3f6"></div>
<svg class="b" style="left:1519.3px;top:825.5px" width="36" height="36" viewBox="0 0 36 36"><circle cx="11" cy="12.5" r="1.8" fill="#333"/><circle cx="11" cy="19" r="1.8" fill="#333"/><circle cx="11" cy="25.5" r="1.8" fill="#333"/><path d="M15 12.5h12M15 19h12M15 25.5h12" stroke="#333" stroke-width="1.8"/></svg>
<div class="b" style="left:1555.3px;top:826.5px;width:1px;height:34px;background:#e3e2e6"></div><svg class="b" style="left:1561.3px;top:839.5px" width="12" height="9" viewBox="0 0 12 9"><path d="M0 0h12L6 9z" fill="#333"/></svg>
<div class="b" style="left:1580px;top:825.5px;width:36px;height:36px;border:1px solid #e3e2e6;border-radius:3px;background:#f4f3f6"></div>
<svg class="b" style="left:1580px;top:825.5px" width="36" height="36" viewBox="0 0 36 36"><text x="15" y="25" font-size="15" font-weight="700" text-anchor="middle" fill="#333" font-family="Liberation Serif" >A</text><text x="23" y="25" font-size="8" font-weight="700" text-anchor="middle" fill="#333" font-family="Liberation Serif" >2</text></svg>
<div class="b" style="left:1619.3px;top:825.5px;width:36px;height:36px;border:1px solid #e3e2e6;border-radius:3px;background:#f4f3f6"></div>
<svg class="b" style="left:1619.3px;top:825.5px" width="36" height="36" viewBox="0 0 36 36"><text x="15" y="25" font-size="15" font-weight="700" text-anchor="middle" fill="#333" font-family="Liberation Serif" >A</text><text x="23" y="19" font-size="8" font-weight="700" text-anchor="middle" fill="#333" font-family="Liberation Serif" >2</text></svg>
<div class="b" style="left:1659.3px;top:825.5px;width:58px;height:36px;border:1px solid #e3e2e6;border-radius:3px;background:#f4f3f6"></div>
<svg class="b" style="left:1659.3px;top:825.5px" width="36" height="36" viewBox="0 0 36 36"><g opacity="0.35"><text x="12" y="17" font-size="11" font-weight="400" text-anchor="middle" fill="#555" font-family="Liberation Serif" >a</text><text x="21" y="28" font-size="14" font-weight="700" text-anchor="middle" fill="#555" font-family="Liberation Serif" >A</text><path d="M10 21 l3 3" stroke="#48c" stroke-width="1.5"/></g></svg>
<div class="b" style="left:1695.3px;top:826.5px;width:1px;height:34px;background:#e3e2e6"></div><svg class="b" style="left:1701.3px;top:839.5px" width="12" height="9" viewBox="0 0 12 9"><path d="M0 0h12L6 9z" fill="#ccc"/></svg>
<div class="b" style="left:937.5px;top:865.5px;width:36px;height:36px;border:1px solid #e3e2e6;border-radius:3px;background:#f4f3f6"></div>
<svg class="b" style="left:937.5px;top:865.5px" width="36" height="36" viewBox="0 0 36 36"><rect x="9" y="9.5" width="18" height="17" rx="1" fill="#eee" stroke="#666" stroke-width="1.4"/><text x="18" y="24" font-size="14" font-weight="700" text-anchor="middle" fill="#333" font-family="Liberation Serif" >&#937;</text></svg>
<div class="b" style="left:977px;top:865.5px;width:36px;height:36px;border:1px solid #e3e2e6;border-radius:3px;background:#f4f3f6"></div>
<svg class="b" style="left:977px;top:865.5px" width="36" height="36" viewBox="0 0 36 36"><rect x="10" y="17.5" width="16" height="1.6" fill="#777"/></svg>
<div class="b" style="left:937.5px;top:904.3px;width:36px;height:36px;border:1px solid #e3e2e6;border-radius:3px;background:#f4f3f6"></div>
<svg class="b" style="left:937.5px;top:904.3px" width="36" height="36" viewBox="0 0 36 36"><path d="M8 15l3 2.5-3 2.5z" fill="#333"/><text x="20" y="27" font-size="22" font-weight="700" text-anchor="middle" fill="#333" font-family="Liberation Sans" >&#182;</text></svg>
<div class="b" style="left:977.0px;top:904.3px;width:36px;height:36px;border:1px solid #e3e2e6;border-radius:3px;background:#f4f3f6"></div>
<svg class="b" style="left:977.0px;top:904.3px" width="36" height="36" viewBox="0 0 36 36"><text x="16" y="27" font-size="22" font-weight="700" text-anchor="middle" fill="#333" font-family="Liberation Sans" >&#182;</text><path d="M28 15l-3 2.5 3 2.5z" fill="#333"/></svg>
<div class="b" style="left:1016.5px;top:904.3px;width:36px;height:36px;border:1px solid #e3e2e6;border-radius:3px;background:#f4f3f6"></div>
<svg class="b" style="left:1016.5px;top:904.3px" width="36" height="36" viewBox="0 0 36 36"><rect x="9" y="8.5" width="18" height="18" fill="#f4f4f6" stroke="none"/><circle cx="18" cy="17.5" r="6" fill="#dcdce0"/><rect x="9" y="8.5" width="18" height="18" fill="none" stroke="#3a5fe0" stroke-width="1.5"/><path d="M10.5 10l3.5 0 -3.5 3.5z M25.5 10l-3.5 0 3.5 3.5z M10.5 25l3.5 0 -3.5 -3.5z M25.5 25l-3.5 0 3.5 -3.5z" fill="#3a5fe0"/></svg>
<div class="b" style="left:1056.0px;top:904.3px;width:36px;height:36px;border:1px solid #e3e2e6;border-radius:3px;background:#f4f3f6"></div>
<svg class="b" style="left:1056.0px;top:904.3px" width="36" height="36" viewBox="0 0 36 36"><path d="M12 7h9l3 3v6H12z" fill="#eef4f4" stroke="#9aa" stroke-width="0.8"/><rect x="7" y="15" width="22" height="10" rx="2.5" fill="#8d8f90"/><rect x="10" y="17" width="16" height="4" fill="#444"/><rect x="11" y="23" width="14" height="5" fill="#dde8ee" stroke="#888" stroke-width="0.6"/></svg>
<div class="b" style="left:1095.5px;top:904.3px;width:36px;height:36px;border:1px solid #e3e2e6;border-radius:3px;background:#f4f3f6"></div>
<svg class="b" style="left:1095.5px;top:904.3px" width="36" height="36" viewBox="0 0 36 36"><rect x="9" y="11" width="7" height="17" rx="2" fill="#333"/><rect x="20" y="11" width="7" height="17" rx="2" fill="#333"/><rect x="10.5" y="8" width="4" height="4" fill="#333"/><rect x="21.5" y="8" width="4" height="4" fill="#333"/><rect x="15" y="13" width="6" height="6" fill="#333"/></svg>
<div class="b" style="left:1135.0px;top:904.3px;width:36px;height:36px;border:1px solid #e3e2e6;border-radius:3px;background:#f4f3f6"></div>
<svg class="b" style="left:1135.0px;top:904.3px" width="36" height="36" viewBox="0 0 36 36"><text x="14" y="18" font-size="14" font-weight="700" text-anchor="middle" fill="#333" font-family="Liberation Serif" >b</text><text x="22" y="26" font-size="14" font-weight="700" text-anchor="middle" fill="#333" font-family="Liberation Serif" >a</text><path d="M9 20 q2 3 5 3" stroke="#3040d0" stroke-width="1.2" fill="none"/><path d="M13 21.5l2 1.5-2.5 1z" fill="#3040d0"/></svg>
<div class="b" style="left:1177.5px;top:906.3px;width:1px;height:32px;background:#dedde1"></div>
<div class="b" style="left:1184.3px;top:904.3px;width:58px;height:36px;border:1px solid #e3e2e6;border-radius:3px;background:#f4f3f6"></div>
<svg class="b" style="left:1184.3px;top:904.3px" width="36" height="36" viewBox="0 0 36 36"><rect x="8.5" y="10" width="19" height="17" rx="1" fill="#dff0fa" stroke="#889" stroke-width="1.2"/><rect x="10" y="11.5" width="16" height="3.5" fill="#3fb0ea"/><path d="M10 18.5h16M10 22h16M14 15v11M18 15v11M22 15v11" stroke="#a8bccc" stroke-width="0.8"/></svg>
<div class="b" style="left:1220.3px;top:905.3px;width:1px;height:34px;background:#e3e2e6"></div><svg class="b" style="left:1226.3px;top:918.3px" width="12" height="9" viewBox="0 0 12 9"><path d="M0 0h12L6 9z" fill="#333"/></svg>
<div class="b" style="left:1246.9px;top:904.3px;width:36px;height:36px;border:1px solid #e3e2e6;border-radius:3px;background:#f4f3f6"></div>
<svg class="b" style="left:1246.9px;top:904.3px" width="36" height="36" viewBox="0 0 36 36"><g opacity="0.45"><rect x="8" y="9" width="20" height="18" fill="#d8ecf8" stroke="#9ab" stroke-width="1"/><rect x="9" y="10" width="18" height="3" fill="#4fb4e8"/><path d="M9 17h18M9 21h18M14 13v13M19 13v13M24 13v13" stroke="#b8c8d4" stroke-width="0.8"/></g><g opacity="0.5"><path d="M21 21l6 6M27 21l-6 6" stroke="#e55" stroke-width="2.5"/></g></svg>
<div class="b" style="left:1286.4px;top:904.3px;width:36px;height:36px;border:1px solid #e3e2e6;border-radius:3px;background:#f4f3f6"></div>
<svg class="b" style="left:1286.4px;top:904.3px" width="36" height="36" viewBox="0 0 36 36"><g opacity="0.45"><rect x="8" y="9" width="20" height="18" fill="#d8ecf8" stroke="#9ab" stroke-width="1"/><rect x="9" y="10" width="18" height="3" fill="#4fb4e8"/><path d="M9 17h18M9 21h18M14 13v13M19 13v13M24 13v13" stroke="#b8c8d4" stroke-width="0.8"/></g><g opacity="0.5"><rect x="9" y="16" width="18" height="3" fill="#88a0e0"/></g></svg>
<div class="b" style="left:1325.9px;top:904.3px;width:36px;height:36px;border:1px solid #e3e2e6;border-radius:3px;background:#f4f3f6"></div>
<svg class="b" style="left:1325.9px;top:904.3px" width="36" height="36" viewBox="0 0 36 36"><g opacity="0.45"><rect x="8" y="9" width="20" height="18" fill="#d8ecf8" stroke="#9ab" stroke-width="1"/><rect x="9" y="10" width="18" height="3" fill="#4fb4e8"/><path d="M9 17h18M9 21h18M14 13v13M19 13v13M24 13v13" stroke="#b8c8d4" stroke-width="0.8"/></g><g opacity="0.5"><rect x="15" y="17" width="5" height="4" fill="#a8a0e0"/></g></svg>
<div class="b" style="left:1365.4px;top:904.3px;width:36px;height:36px;border:1px solid #e3e2e6;border-radius:3px;background:#f4f3f6"></div>
<svg class="b" style="left:1365.4px;top:904.3px" width="36" height="36" viewBox="0 0 36 36"><g opacity="0.45"><rect x="8" y="9" width="20" height="18" fill="#d8ecf8" stroke="#9ab" stroke-width="1"/><rect x="9" y="10" width="18" height="3" fill="#4fb4e8"/><path d="M9 17h18M9 21h18M14 13v13M19 13v13M24 13v13" stroke="#b8c8d4" stroke-width="0.8"/></g><g opacity="0.55"><rect x="6" y="11" width="18" height="3.5" fill="#5ac050"/></g></svg>
<div class="b" style="left:1404.9px;top:904.3px;width:36px;height:36px;border:1px solid #e3e2e6;border-radius:3px;background:#f4f3f6"></div>
<svg class="b" style="left:1404.9px;top:904.3px" width="36" height="36" viewBox="0 0 36 36"><g opacity="0.45"><rect x="8" y="9" width="20" height="18" fill="#d8ecf8" stroke="#9ab" stroke-width="1"/><rect x="9" y="10" width="18" height="3" fill="#4fb4e8"/><path d="M9 17h18M9 21h18M14 13v13M19 13v13M24 13v13" stroke="#b8c8d4" stroke-width="0.8"/></g><g opacity="0.55"><rect x="6" y="23" width="18" height="3.5" fill="#5ac050"/></g></svg>
<div class="b" style="left:1444.4px;top:904.3px;width:36px;height:36px;border:1px solid #e3e2e6;border-radius:3px;background:#f4f3f6"></div>
<svg class="b" style="left:1444.4px;top:904.3px" width="36" height="36" viewBox="0 0 36 36"><g opacity="0.45"><rect x="8" y="9" width="20" height="18" fill="#d8ecf8" stroke="#9ab" stroke-width="1"/><rect x="9" y="10" width="18" height="3" fill="#4fb4e8"/><path d="M9 17h18M9 21h18M14 13v13M19 13v13M24 13v13" stroke="#b8c8d4" stroke-width="0.8"/></g><g opacity="0.55"><rect x="10" y="19" width="18" height="3.5" fill="#e06070"/></g></svg>
<div class="b" style="left:1483.9px;top:904.3px;width:36px;height:36px;border:1px solid #e3e2e6;border-radius:3px;background:#f4f3f6"></div>
<svg class="b" style="left:1483.9px;top:904.3px" width="36" height="36" viewBox="0 0 36 36"><g opacity="0.45"><rect x="8" y="9" width="20" height="18" fill="#d8ecf8" stroke="#9ab" stroke-width="1"/><rect x="9" y="10" width="18" height="3" fill="#4fb4e8"/><path d="M9 17h18M9 21h18M14 13v13M19 13v13M24 13v13" stroke="#b8c8d4" stroke-width="0.8"/></g><g opacity="0.55"><rect x="12" y="6" width="3.5" height="22" fill="#5ac050"/></g></svg>
<div class="b" style="left:1523.4px;top:904.3px;width:36px;height:36px;border:1px solid #e3e2e6;border-radius:3px;background:#f4f3f6"></div>
<svg class="b" style="left:1523.4px;top:904.3px" width="36" height="36" viewBox="0 0 36 36"><g opacity="0.45"><rect x="8" y="9" width="20" height="18" fill="#d8ecf8" stroke="#9ab" stroke-width="1"/><rect x="9" y="10" width="18" height="3" fill="#4fb4e8"/><path d="M9 17h18M9 21h18M14 13v13M19 13v13M24 13v13" stroke="#b8c8d4" stroke-width="0.8"/></g><g opacity="0.55"><rect x="20" y="6" width="3.5" height="22" fill="#5ac050"/></g></svg>
<div class="b" style="left:1562.9px;top:904.3px;width:36px;height:36px;border:1px solid #e3e2e6;border-radius:3px;background:#f4f3f6"></div>
<svg class="b" style="left:1562.9px;top:904.3px" width="36" height="36" viewBox="0 0 36 36"><g opacity="0.45"><rect x="8" y="9" width="20" height="18" fill="#d8ecf8" stroke="#9ab" stroke-width="1"/><rect x="9" y="10" width="18" height="3" fill="#4fb4e8"/><path d="M9 17h18M9 21h18M14 13v13M19 13v13M24 13v13" stroke="#b8c8d4" stroke-width="0.8"/></g><g opacity="0.55"><rect x="17" y="12" width="3.5" height="22" fill="#e06070"/></g></svg>
<div class="b" style="left:1602.4px;top:904.3px;width:36px;height:36px;border:1px solid #e3e2e6;border-radius:3px;background:#f4f3f6"></div>
<svg class="b" style="left:1602.4px;top:904.3px" width="36" height="36" viewBox="0 0 36 36"><g opacity="0.45"><rect x="8" y="9" width="20" height="18" fill="#d8ecf8" stroke="#9ab" stroke-width="1"/><rect x="9" y="10" width="18" height="3" fill="#4fb4e8"/><path d="M9 17h18M9 21h18M14 13v13M19 13v13M24 13v13" stroke="#b8c8d4" stroke-width="0.8"/></g><g opacity="0.5"><path d="M12 15h12M12 19h12M12 23h12M14 13v12M18 13v12M22 13v12" stroke="#7070e0" stroke-width="1.8"/></g></svg>
<div class="b" style="left:1641.9px;top:904.3px;width:36px;height:36px;border:1px solid #e3e2e6;border-radius:3px;background:#f4f3f6"></div>
<svg class="b" style="left:1641.9px;top:904.3px" width="36" height="36" viewBox="0 0 36 36"><g opacity="0.45"><rect x="8" y="9" width="20" height="18" fill="#d8ecf8" stroke="#9ab" stroke-width="1"/><rect x="9" y="10" width="18" height="3" fill="#4fb4e8"/><path d="M9 17h18M9 21h18M14 13v13M19 13v13M24 13v13" stroke="#b8c8d4" stroke-width="0.8"/></g></svg>
<div class="b" style="left:937.5px;top:944px;width:36px;height:36px;border:1px solid #e3e2e6;border-radius:3px;background:#e3e2e6"></div>
<svg class="b" style="left:937.5px;top:944px" width="36" height="36" viewBox="0 0 36 36"><g stroke="#555" stroke-width="1.3" stroke-dasharray="1.3 1.3" fill="none" opacity="0.85"><rect x="9" y="9.5" width="18" height="18"/><path d="M18 9.5v18M9 18.5h18"/></g></svg>
<div class="b" style="left:977.0px;top:944px;width:36px;height:36px;border:1px solid #e3e2e6;border-radius:3px;background:#f4f3f6"></div>
<svg class="b" style="left:977.0px;top:944px" width="36" height="36" viewBox="0 0 36 36"><text x="18" y="27" font-size="21" font-weight="700" text-anchor="middle" fill="#333" font-family="Liberation Sans" >&#182;</text></svg>
<div class="b" style="left:1016.5px;top:944px;width:36px;height:36px;border:1px solid #e3e2e6;border-radius:3px;background:#f4f3f6"></div>
<svg class="b" style="left:1016.5px;top:944px" width="36" height="36" viewBox="0 0 36 36"><path d="M10 7h10l4 4v18H10z" fill="#f4f8f8" stroke="#9aa" stroke-width="0.8"/><text x="15" y="22" font-size="9" font-weight="700" fill="#5cc0a0" font-family="Liberation Sans">P</text><circle cx="22" cy="23" r="4" fill="#e8f0f8" stroke="#99a" stroke-width="1.2"/><path d="M19 26l-3 3" stroke="#888" stroke-width="1.6"/></svg>
<div class="b" style="left:1056.0px;top:944px;width:36px;height:36px;border:1px solid #e3e2e6;border-radius:3px;background:#f4f3f6"></div>
<svg class="b" style="left:1056.0px;top:944px" width="36" height="36" viewBox="0 0 36 36"><rect x="9" y="9" width="18" height="18" rx="1.5" fill="#e8e8e8" stroke="#999" stroke-width="1.2"/><path d="M13 16v4h10v-4" stroke="#333" stroke-width="2.2" fill="none"/></svg>
<div class="b" style="left:1095.5px;top:944px;width:36px;height:36px;border:1px solid #e3e2e6;border-radius:3px;background:#f4f3f6"></div>
<svg class="b" style="left:1095.5px;top:944px" width="36" height="36" viewBox="0 0 36 36"><text x="14" y="21" font-size="14" font-weight="700" text-anchor="middle" fill="#a02ab0" font-family="Liberation Sans">A</text><text x="21" y="29" font-size="17" font-weight="700" text-anchor="middle" fill="#1a78d0" font-family="Liberation Serif">A</text></svg>
<div class="b" style="left:1135.0px;top:944px;width:36px;height:36px;border:1px solid #e3e2e6;border-radius:3px;background:#f4f3f6"></div>
<svg class="b" style="left:1135.0px;top:944px" width="36" height="36" viewBox="0 0 36 36"><text x="12.5" y="22.5" font-size="8.5" font-weight="700" text-anchor="middle" fill="#a6a6a6" font-family="Liberation Sans">66</text><text x="23.5" y="22.5" font-size="8.5" font-weight="700" text-anchor="middle" fill="#a6a6a6" font-family="Liberation Sans">99</text></svg>
<div class="b" style="left:1174.5px;top:944px;width:36px;height:36px;border:1px solid #e3e2e6;border-radius:3px;background:#f4f3f6"></div>
<svg class="b" style="left:1174.5px;top:944px" width="36" height="36" viewBox="0 0 36 36"><text x="18" y="21.5" font-size="6.5" font-weight="700" text-anchor="middle" fill="#aaa" font-family="Liberation Mono">ABBR</text></svg>
<div class="b" style="left:1214.0px;top:944px;width:36px;height:36px;border:1px solid #e3e2e6;border-radius:3px;background:#f4f3f6"></div>
<svg class="b" style="left:1214.0px;top:944px" width="36" height="36" viewBox="0 0 36 36"><text x="18" y="21.5" font-size="6.5" font-weight="700" text-anchor="middle" fill="#aaa" font-family="Liberation Mono">A.B.C.</text></svg>
<div class="b" style="left:1253.5px;top:944px;width:36px;height:36px;border:1px solid #e3e2e6;border-radius:3px;background:#f4f3f6"></div>
<svg class="b" style="left:1253.5px;top:944px" width="36" height="36" viewBox="0 0 36 36"><text x="18" y="26" font-size="17" font-weight="400" text-anchor="middle" fill="#aaa" font-family="Liberation Serif" >A</text><rect x="8" y="18.5" width="20" height="1.2" fill="#e99"/></svg>
<div class="b" style="left:1293.0px;top:944px;width:36px;height:36px;border:1px solid #e3e2e6;border-radius:3px;background:#f4f3f6"></div>
<svg class="b" style="left:1293.0px;top:944px" width="36" height="36" viewBox="0 0 36 36"><text x="18" y="25" font-size="17" font-weight="400" text-anchor="middle" fill="#aaa" font-family="Liberation Serif" >A</text><rect x="8" y="28" width="20" height="1.2" fill="#aab0ee"/></svg>
<div class="b" style="left:1332.5px;top:944px;width:36px;height:36px;border:1px solid #e3e2e6;border-radius:3px;background:#f4f3f6"></div>
<svg class="b" style="left:1332.5px;top:944px" width="36" height="36" viewBox="0 0 36 36"><rect x="7" y="13" width="18" height="16" rx="1.5" fill="#e8f0f8" stroke="#4a88d0" stroke-width="1.5"/><path d="M10 18h12M10 21h12M10 24h12" stroke="#8ab" stroke-width="1"/><path d="M14 12 Q20 5 28 9 L25 14 Q20 12 17 15z" fill="#e8a850"/></svg>
<div class="b" style="left:1372.0px;top:944px;width:36px;height:36px;border:1px solid #e3e2e6;border-radius:3px;background:#f4f3f6"></div>
<svg class="b" style="left:1372.0px;top:944px" width="36" height="36" viewBox="0 0 36 36"><circle cx="18" cy="9.5" r="2.3" fill="none" stroke="#888" stroke-width="1.6"/><path d="M18 12v16M13 16h10" stroke="#888" stroke-width="2.4"/><path d="M9 20 Q10 28 18 29 Q26 28 27 20" stroke="#888" stroke-width="2.4" fill="none"/><path d="M7 22l2.5-4 2.5 4zM24 22l2.5-4 2.5 4z" fill="#888"/></svg>
<div class="b" style="left:1411.5px;top:944px;width:36px;height:36px;border:1px solid #e3e2e6;border-radius:3px;background:#f4f3f6"></div>
<svg class="b" style="left:1411.5px;top:944px" width="36" height="36" viewBox="0 0 36 36"><g opacity="0.35"><rect x="7" y="15" width="9" height="8" rx="4" fill="none" stroke="#777" stroke-width="2.5"/><rect x="20" y="15" width="9" height="8" rx="4" fill="none" stroke="#777" stroke-width="2.5"/><path d="M18 8v4M18 26v4M12 9l2 3M24 9l-2 3" stroke="#888" stroke-width="1"/></g></svg>
<div class="b" style="left:1451.0px;top:944px;width:36px;height:36px;border:1px solid #e3e2e6;border-radius:3px;background:#f4f3f6"></div>
<svg class="b" style="left:1451.0px;top:944px" width="36" height="36" viewBox="0 0 36 36"><rect x="6.5" y="14.5" width="14" height="9" rx="4.5" fill="none" stroke="#777" stroke-width="2.6"/><rect x="15.5" y="14.5" width="14" height="9" rx="4.5" fill="none" stroke="#777" stroke-width="2.6"/></svg>
<div class="b" style="left:1490.5px;top:944px;width:36px;height:36px;border:1px solid #e3e2e6;border-radius:3px;background:#f4f3f6"></div>
<svg class="b" style="left:1490.5px;top:944px" width="36" height="36" viewBox="0 0 36 36"><text x="16" y="17" font-size="10" font-weight="700" text-anchor="middle" fill="#333" font-family="Liberation Sans">abc</text><path d="M9 20h14" stroke="#444" stroke-width="1.2" stroke-dasharray="1.5 1"/><path d="M16 24 L20 28 L28 18" stroke="#22aa22" stroke-width="3.2" fill="none"/></svg>
<div class="b" style="left:1530.0px;top:944px;width:36px;height:36px;border:1px solid #e3e2e6;border-radius:3px;background:#f4f3f6"></div>
<svg class="b" style="left:1530.0px;top:944px" width="36" height="36" viewBox="0 0 36 36"><rect x="7.5" y="11" width="21" height="16" rx="1" fill="#fff" stroke="#888" stroke-width="1.2"/><rect x="7.5" y="11" width="21" height="2.5" fill="#999"/><rect x="8.5" y="20" width="19" height="6" fill="#d8ecf8"/><path d="M8 19.5h20" stroke="#888" stroke-width="0.8"/></svg>
<div class="b" style="left:1569.5px;top:944px;width:36px;height:36px;border:1px solid #e3e2e6;border-radius:3px;background:#f4f3f6"></div>
<svg class="b" style="left:1569.5px;top:944px" width="36" height="36" viewBox="0 0 36 36"><rect x="7.5" y="11" width="21" height="16" rx="1" fill="#f2f2f2" stroke="#888" stroke-width="1.2"/><rect x="7.5" y="11" width="21" height="2.5" fill="#999"/><rect x="20" y="15" width="7" height="11" fill="#8ab8e8"/></svg>
<div class="b" style="left:1609.0px;top:944px;width:36px;height:36px;border:1px solid #e3e2e6;border-radius:3px;background:#f4f3f6"></div>
<svg class="b" style="left:1609.0px;top:944px" width="36" height="36" viewBox="0 0 36 36"><path d="M10 7h10l4 4v18H10z" fill="#f4f8f8" stroke="#9aa" stroke-width="0.8"/><path d="M13 12h8M13 15h8M13 18h8" stroke="#bbb" stroke-width="0.8"/><rect x="17" y="22" width="6" height="5" rx="2.5" fill="none" stroke="#666" stroke-width="1.6"/><rect x="21" y="22" width="6" height="5" rx="2.5" fill="none" stroke="#666" stroke-width="1.6"/></svg>
<div class="b" style="left:1648.5px;top:944px;width:36px;height:36px;border:1px solid #e3e2e6;border-radius:3px;background:#f4f3f6"></div>
<svg class="b" style="left:1648.5px;top:944px" width="36" height="36" viewBox="0 0 36 36"><rect x="7" y="10" width="22" height="17" fill="#dde8f0" stroke="#889" stroke-width="1"/><rect x="8.5" y="11.5" width="19" height="14" fill="#2a80c8"/><path d="M8.5 20 Q14 15 20 21 L27.5 25.5 H8.5z" fill="#3a8040"/><path d="M25 20l1.3 2.8 3 .3-2.3 2 .8 3-2.8-1.6-2.8 1.6.8-3-2.3-2 3-.3z" fill="#f0d020" stroke="#c0a010" stroke-width="0.4"/></svg>
<div class="b" style="left:1688.0px;top:944px;width:36px;height:36px;border:1px solid #e3e2e6;border-radius:3px;background:#f4f3f6"></div>
<svg class="b" style="left:1688.0px;top:944px" width="36" height="36" viewBox="0 0 36 36"><rect x="10" y="8.5" width="16" height="20" rx="1.5" fill="#3a3a3a"/><rect x="13.5" y="10" width="9" height="8" fill="#6a90d0"/><rect x="13.5" y="19.5" width="9" height="7.5" fill="#6a90d0"/><path d="M11.5 10v17M24.5 10v17" stroke="#999" stroke-width="1.2" stroke-dasharray="1.2 1.2"/></svg>
</div><div class="t" style="left:943px;top:999.20px;font-size:18.67px;color:#333;letter-spacing:0.03px;">Dit is de voorbeeldomschrijving van het product. Letop! Er zijn drie paragrafen aangemaakt</div>
<div class="t" style="left:943px;top:1034.00px;font-size:18.67px;color:#333;letter-spacing:0.03px;">die allemaal in dit veld terug moeten komen inclusief een afbeelding.</div>
<div class="b" style="left:1713px;top:983px;width:24px;height:110px;background:#f1f0f3"></div>
<div class="b" style="left:1715px;top:1007px;width:20px;height:52px;background:#c1c0c4"></div>
<svg class="b" style="left:1719px;top:992px" width="11" height="6" viewBox="0 0 11 6"><path d="M0 6h11L5.5 0z" fill="#a3a2a6"/></svg>

</body></html>
